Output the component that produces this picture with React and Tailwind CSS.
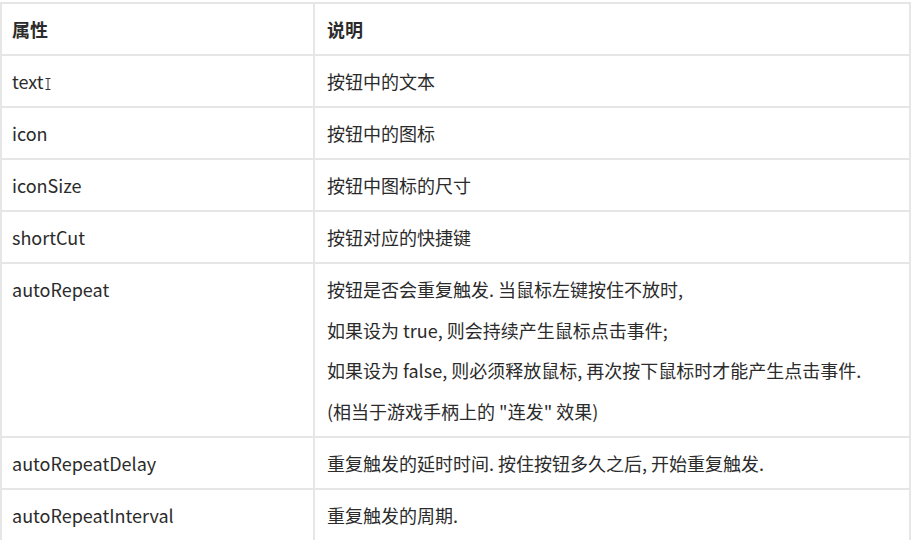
import React from 'react';

const rows = [
  { name: 'text', desc: ['按钮中的文本'], cursor: true },
  { name: 'icon', desc: ['按钮中的图标'] },
  { name: 'iconSize', desc: ['按钮中图标的尺寸'] },
  { name: 'shortCut', desc: ['按钮对应的快捷键'] },
  {
    name: 'autoRepeat',
    desc: [
      '按钮是否会重复触发. 当鼠标左键按住不放时,',
      '如果设为 true, 则会持续产生鼠标点击事件;',
      '如果设为 false, 则必须释放鼠标, 再次按下鼠标时才能产生点击事件.',
      '(相当于游戏手柄上的 "连发" 效果)',
    ],
  },
  { name: 'autoRepeatDelay', desc: ['重复触发的延时时间. 按住按钮多久之后, 开始重复触发.'] },
  { name: 'autoRepeatInterval', desc: ['重复触发的周期.'] },
];

function Cursor() {
  return (
    <svg width="6" height="12" viewBox="0 0 6 12" className="inline-block ml-[1px] align-[-1px]">
      <path d="M0.5 0.5h5M3 0.5v11M0.5 11.5h5" stroke="#333" strokeWidth="1" fill="none" />
    </svg>
  );
}

export default function App() {
  return (
    <div className="bg-white w-[918px] h-[540px] overflow-hidden pt-[2px]" style={{ fontFamily: '"Noto Sans CJK SC", "Noto Sans", sans-serif' }}>
      <table className="w-[911px] border-collapse text-[18px] leading-[26px] text-[#2b2b2b]">
        <thead>
          <tr>
            <th className="w-[313px] border-2 border-[#e6e6e6] px-[10px] py-[12px] text-left font-bold">属性</th>
            <th className="border-2 border-[#e6e6e6] px-[12px] py-[12px] text-left font-bold">说明</th>
          </tr>
        </thead>
        <tbody>
          {rows.map((r) => (
            <tr key={r.name}>
              <td className="border-2 border-[#e6e6e6] px-[10px] py-[12px] align-top">
                {r.name}
                {r.cursor && <Cursor />}
              </td>
              <td className="border-2 border-[#e6e6e6] px-[12px] py-[12px] align-top">
                <div className="flex flex-col gap-[14.67px]">
                  {r.desc.map((d) => (
                    <p key={d}>{d}</p>
                  ))}
                </div>
              </td>
            </tr>
          ))}
        </tbody>
      </table>
    </div>
  );
}
